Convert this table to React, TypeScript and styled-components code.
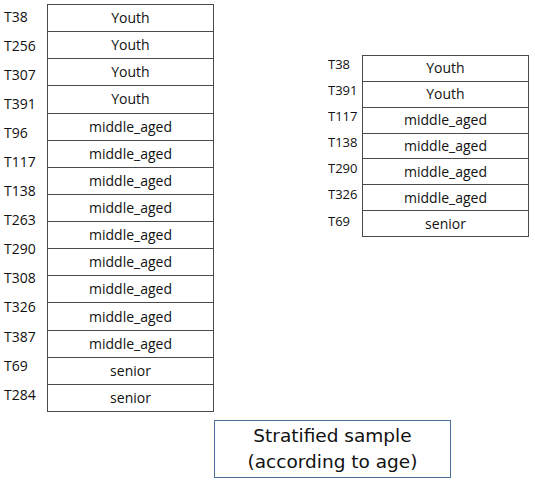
import * as React from 'react';
import styled, { createGlobalStyle } from 'styled-components';

const GlobalStyle = createGlobalStyle`
  body {
    margin: 0;
    background: #fff;
    font-family: 'Open Sans', 'Noto Sans', sans-serif;
    color: #111;
  }
`;

const Page = styled.div`
  width: 535px;
  height: 481px;
  padding: 1px 0 0 4px;
  box-sizing: border-box;
  overflow: hidden;
`;

const TopRow = styled.div`
  display: flex;
  align-items: flex-start;
`;

const Group = styled.div<{ $top: number; $left: number }>`
  display: flex;
  align-items: flex-start;
  margin-top: ${p => p.$top}px;
  margin-left: ${p => p.$left}px;
`;

const Labels = styled.div<{ $width: number; $pad: number }>`
  width: ${p => p.$width}px;
  padding-top: ${p => p.$pad}px;
  display: flex;
  flex-direction: column;
`;

const Label = styled.div<{ $h: number; $size: number }>`
  height: ${p => p.$h}px;
  line-height: ${p => p.$h}px;
  font-size: ${p => p.$size}px;
  white-space: nowrap;
`;

const Table = styled.div<{ $rows: number; $width: number; $height: number; $top: number }>`
  display: grid;
  grid-template-rows: repeat(${p => p.$rows}, 1fr);
  gap: 1px;
  padding: 1px;
  box-sizing: border-box;
  width: ${p => p.$width}px;
  height: ${p => p.$height}px;
  margin-top: ${p => p.$top}px;
  background: #4a4a4a;
`;

const Cell = styled.div`
  background: #fff;
  display: flex;
  align-items: center;
  justify-content: center;
  font-size: 14px;
  padding-bottom: 1px;
`;

const Caption = styled.div`
  margin: 8px 0 0 210px;
  width: 237px;
  height: 58px;
  box-sizing: border-box;
  border: 1px solid #4a6f96;
  display: flex;
  flex-direction: column;
  align-items: center;
  justify-content: center;
  font-family: 'DejaVu Sans', Verdana, sans-serif;
  font-size: 18.5px;
  line-height: 26px;
  color: #111;
`;

const leftLabels = ['T38', 'T256', 'T307', 'T391', 'T96', 'T117', 'T138', 'T263', 'T290', 'T308', 'T326', 'T387', 'T69', 'T284'];
const leftCells = [
  'Youth', 'Youth', 'Youth', 'Youth',
  'middle_aged', 'middle_aged', 'middle_aged', 'middle_aged', 'middle_aged',
  'middle_aged', 'middle_aged', 'middle_aged', 'middle_aged',
  'senior', 'senior',
];

const rightLabels = ['T38', 'T391', 'T117', 'T138', 'T290', 'T326', 'T69'];
const rightCells = ['Youth', 'Youth', 'middle_aged', 'middle_aged', 'middle_aged', 'middle_aged', 'senior'];

export default function App() {
  return (
    <>
      <GlobalStyle />
      <Page>
        <TopRow>
          <Group $top={0} $left={0}>
            <Labels $width={43} $pad={0.5}>
              {leftLabels.map((l, i) => (
                <Label key={i} $h={29.1} $size={14}>{l}</Label>
              ))}
            </Labels>
            <Table $rows={leftCells.length} $width={167} $height={408} $top={3}>
              {leftCells.map((c, i) => (
                <Cell key={i}>{c}</Cell>
              ))}
            </Table>
          </Group>
          <Group $top={50} $left={114}>
            <Labels $width={34} $pad={0}>
              {rightLabels.map((l, i) => (
                <Label key={i} $h={26.1} $size={13}>{l}</Label>
              ))}
            </Labels>
            <Table $rows={rightCells.length} $width={167} $height={182} $top={4}>
              {rightCells.map((c, i) => (
                <Cell key={i}>{c}</Cell>
              ))}
            </Table>
          </Group>
        </TopRow>
        <Caption>
          <span>Stratified sample</span>
          <span>(according to age)</span>
        </Caption>
      </Page>
    </>
  );
}
